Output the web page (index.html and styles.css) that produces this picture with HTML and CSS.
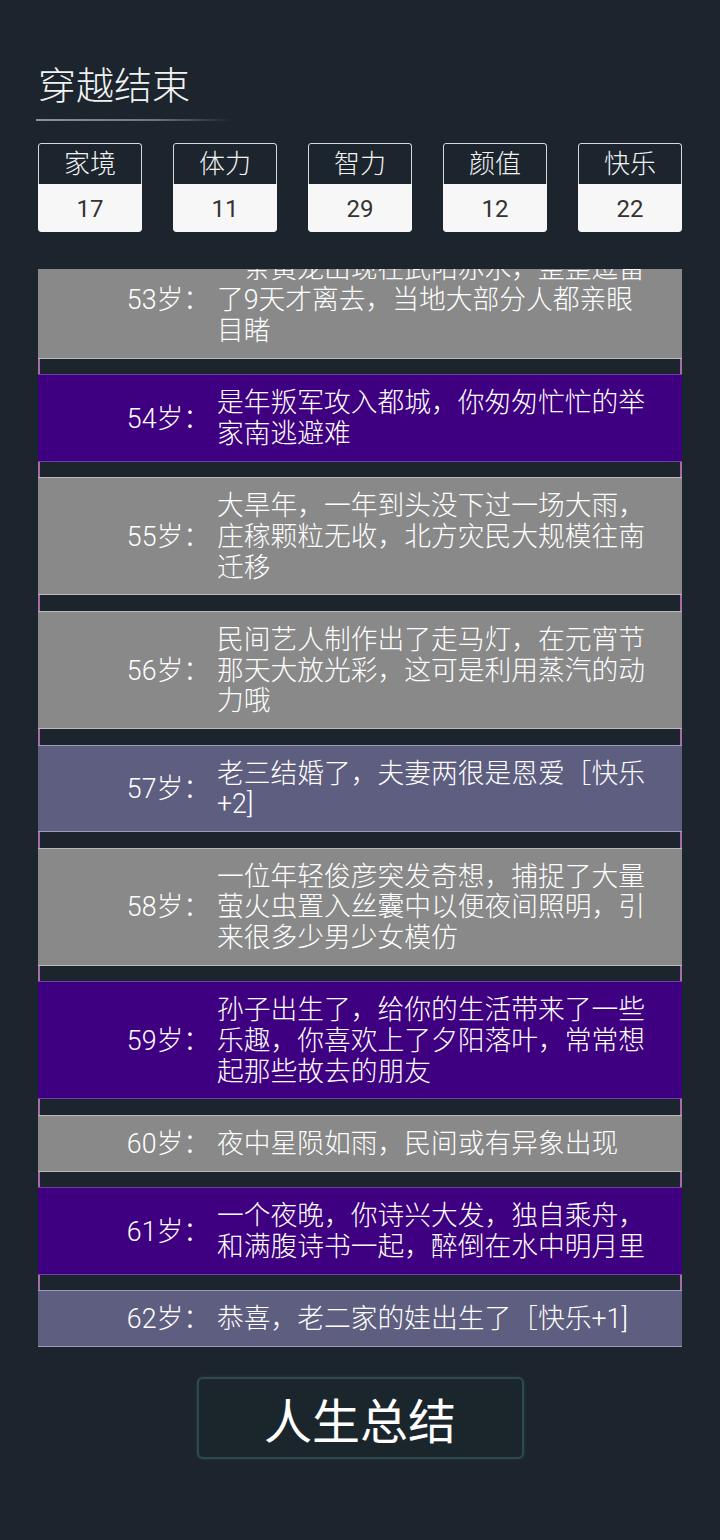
FILE: index.html
```html
<!DOCTYPE html>
<html lang="zh-CN">
<head>
<meta charset="utf-8">
<title>穿越结束</title>
<link rel="stylesheet" href="styles.css">
</head>
<body>
<div class="page">
  <h1 class="title">穿越结束</h1>
  <div class="title-line"></div>

  <div class="stats">
    <div class="stat"><div class="stat-name">家境</div><div class="stat-value">17</div></div>
    <div class="stat"><div class="stat-name">体力</div><div class="stat-value">11</div></div>
    <div class="stat"><div class="stat-name">智力</div><div class="stat-value">29</div></div>
    <div class="stat"><div class="stat-name">颜值</div><div class="stat-value">12</div></div>
    <div class="stat"><div class="stat-name">快乐</div><div class="stat-value">22</div></div>
  </div>

  <div class="log">
    <div class="event grey"><div class="age">53岁：</div><div class="text">一条黄龙出现在武阳赤水，整整逗留了9天才离去，当地大部分人都亲眼目睹</div></div>
    <div class="event purple"><div class="age">54岁：</div><div class="text">是年叛军攻入都城，你匆匆忙忙的举家南逃避难</div></div>
    <div class="event grey"><div class="age">55岁：</div><div class="text">大旱年，一年到头没下过一场大雨，庄稼颗粒无收，北方灾民大规模往南迁移</div></div>
    <div class="event grey"><div class="age">56岁：</div><div class="text">民间艺人制作出了走马灯，在元宵节那天大放光彩，这可是利用蒸汽的动力哦</div></div>
    <div class="event slate"><div class="age">57岁：</div><div class="text">老三结婚了，夫妻两很是恩爱［快乐+2]</div></div>
    <div class="event grey"><div class="age">58岁：</div><div class="text">一位年轻俊彦突发奇想，捕捉了大量萤火虫置入丝囊中以便夜间照明，引来很多少男少女模仿</div></div>
    <div class="event purple"><div class="age">59岁：</div><div class="text">孙子出生了，给你的生活带来了一些乐趣，你喜欢上了夕阳落叶，常常想起那些故去的朋友</div></div>
    <div class="event grey"><div class="age">60岁：</div><div class="text">夜中星陨如雨，民间或有异象出现</div></div>
    <div class="event purple"><div class="age">61岁：</div><div class="text">一个夜晚，你诗兴大发，独自乘舟，和满腹诗书一起，醉倒在水中明月里</div></div>
    <div class="event slate"><div class="age">62岁：</div><div class="text">恭喜，老二家的娃出生了［快乐+1]</div></div>
  </div>

  <div class="actions">
    <button class="summary-btn">人生总结</button>
  </div>
</div>
</body>
</html>
```

FILE: styles.css
```css
html, body {
  margin: 0;
  padding: 0;
  background: #1c252d;
}

body {
  font-family: Roboto, "Noto Sans CJK SC", "Noto Sans", sans-serif;
  font-weight: 300;
  color: #f4f4f4;
  width: 720px;
  height: 1540px;
  overflow: hidden;
}

.page {
  padding: 63px 38px 0 38px;
}

.title {
  margin: 0;
  font-size: 38px;
  line-height: 46px;
  font-weight: 300;
  color: #f2f2f2;
}

.title-line {
  margin: 10px 0 0 -2px;
  width: 196px;
  height: 2px;
  background: linear-gradient(to right, #8e9398 0%, #70757a 60%, rgba(112,117,122,0) 100%);
}

.stats {
  margin-top: 22px;
  display: flex;
  justify-content: space-between;
}

.stat {
  width: 104px;
  border-radius: 3px;
  overflow: hidden;
}

.stat-name {
  height: 40px;
  border: 1px solid #d8d8d8;
  border-bottom: none;
  border-radius: 3px 3px 0 0;
  text-align: center;
  font-size: 26px;
  line-height: 41px;
  color: #f2f2f2;
  background: #1c252d;
}

.stat-value {
  height: 48px;
  background: #f7f7f7;
  text-align: center;
  font-size: 24px;
  line-height: 50px;
  color: #333333;
  font-weight: 400;
  border-radius: 0 0 3px 3px;
}

.log {
  margin-top: 37px;
  height: 1078px;
  display: flex;
  flex-direction: column;
  justify-content: flex-end;
  gap: 15.6px;
  overflow: hidden;
  background: linear-gradient(to right, #a86aa8 0, #a86aa8 2px, transparent 2px, transparent calc(100% - 2px), #a86aa8 calc(100% - 2px), #a86aa8 100%);
}

.event {
  flex: none;
  display: grid;
  grid-template-columns: 172px 1fr;
  column-gap: 7px;
  align-items: center;
  padding: 13px 25px 11px 0;
  font-size: 26.75px;
  line-height: 30.7px;
  color: #ffffff;
  border-top: 1px solid;
  border-bottom: 1px solid;
}

.age {
  text-align: right;
  white-space: nowrap;
}

.text {
  word-break: break-all;
}

.grey {
  background: #898989;
  border-color: #b9b9b9;
}

.purple {
  background: #3e0080;
  border-color: #6b3fa3;
}

.slate {
  background: #5e5e80;
  border-color: #9c9cba;
}

.actions {
  margin-top: 30px;
  display: flex;
  justify-content: center;
}

.summary-btn {
  width: 327px;
  height: 82px;
  border: 2px solid #2e4a4d;
  border-radius: 6px;
  background: #1b252c;
  color: #ffffff;
  font-family: "Noto Sans CJK SC", "Noto Sans", sans-serif;
  font-weight: 400;
  font-size: 48px;
  line-height: 1;
  padding: 0;
  box-shadow: 0 0 3px rgba(70, 110, 110, 0.35);
}
```
